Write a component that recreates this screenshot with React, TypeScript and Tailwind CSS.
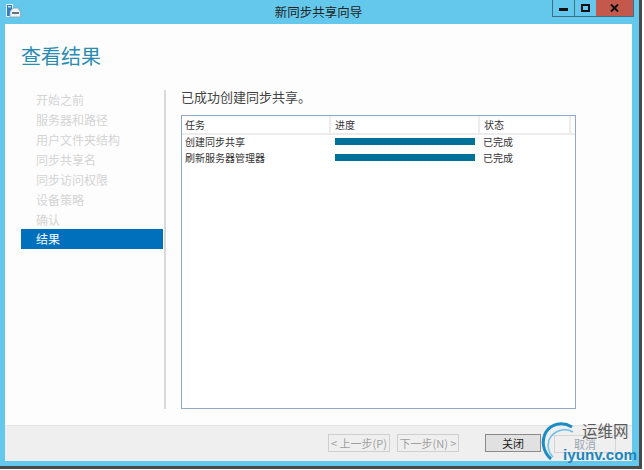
const cjk = "font-['Noto_Sans_CJK_SC','Noto_Sans',sans-serif]";

const steps = ["开始之前", "服务器和路径", "用户文件夹结构", "同步共享名", "同步访问权限", "设备策略", "确认"];

const tasks = ["创建同步共享", "刷新服务器管理器"];

function AppIcon() {
    return (
        <svg width="15" height="14" viewBox="0 0 15 14" className="mt-[4px] ml-[1px] shrink-0">
            <rect x="0.5" y="0.5" width="6" height="12" fill="#2f7fc0" stroke="#e8f4fb" />
            <rect x="2" y="2" width="3" height="1.5" fill="#bfe0f5" />
            <path d="M5 6 L8 4 L12 4 L14.5 8 L14.5 13 L4 13 L4 8 Z" fill="#eef3f6" stroke="#8fa3b0" strokeWidth="0.8" />
            <rect x="6" y="8" width="7" height="2" fill="#5f7482" />
        </svg>
    );
}

function WizardButton({ label, disabled }: { label: string; disabled?: boolean }) {
    return (
        <button
            className={
                disabled
                    ? "w-[62px] h-[18px] border border-[#cfcfcf] bg-[#efefef] text-[11px] leading-[16px] text-[#9f9f9f] whitespace-pre"
                    : "w-[56px] h-[18px] border border-[#8a8a8a] bg-[#e1e1e1] text-[11px] leading-[16px] text-[#222]"
            }
        >
            {label}
        </button>
    );
}

function Watermark() {
    return (
        <div className="absolute left-[538px] top-[419px] w-[106px] h-[51px]">
            <svg width="56" height="51" viewBox="0 0 56 51" className="absolute left-0 top-0">
                <path d="M34 8 C24 2 13 5 8 13 C3 22 5 33 13 40" fill="none" stroke="#1b8cc4" strokeWidth="3" />
                <path d="M35 13 C26 8 15 12 11 21 C9 28 10 33 15 38" fill="none" stroke="#6fc0e4" strokeWidth="1.5" />
            </svg>
            <span className="absolute left-[44px] top-[1px] text-[15.5px] leading-[20px] text-[#5a5a5a]">运维网</span>
            <span className="absolute left-[25px] top-[27px] font-['Liberation_Sans',sans-serif] font-bold text-[15.2px] leading-[18px] text-[#1d86bd]">iyunv.com</span>
        </div>
    );
}

export default function App() {
    return (
        <div className={`relative w-[644px] h-[470px] overflow-hidden bg-white ${cjk}`}>
            <div className="w-[642px] h-[469px] bg-[#4a4a4a] pr-[3px] pb-[3px]">
                <div className="h-full flex flex-col bg-[#63c8ec] pl-[5px] pr-[7px] pb-[5px]">
                    <div className="h-[24px] shrink-0 flex relative">
                        <AppIcon />
                        <div className="flex-1 text-center text-[12.5px] leading-[24px] text-[#222] pl-[64px]">新同步共享向导</div>
                        <div className="flex h-[17px] border-l border-b border-r border-[#3f6f85] -mr-[2px]">
                            <div className="w-[22px] flex items-center justify-center border-r border-[#3f6f85]">
                                <div className="w-[9px] h-[3px] bg-[#111] mt-[3px]" />
                            </div>
                            <div className="w-[21px] flex items-center justify-center">
                                <div className="w-[9px] h-[8px] border-2 border-[#111]" />
                            </div>
                            <div className="w-[37px] flex items-center justify-center bg-[#c4584c] text-[#111]">
                                <svg width="9" height="8" viewBox="0 0 9 8">
                                    <path d="M1 0.5 L8 7.5 M8 0.5 L1 7.5" stroke="#111" strokeWidth="2" />
                                </svg>
                            </div>
                        </div>
                    </div>
                    <div className="flex-1 flex flex-col bg-white min-h-0">
                        <div className="flex-1 flex flex-col bg-[#fdfdfd] min-h-0">
                            <h1 className="pl-[16px] pt-[18px] h-[66px] shrink-0 text-[20px] leading-[28px] font-normal text-[#2b8cb2]">查看结果</h1>
                            <div className="flex h-[319px] pl-[16px]">
                                <div className="w-[142px] shrink-0">
                                    {steps.map((s) => (
                                        <div key={s} className="h-[20px] pl-[15px] text-[12px] leading-[20px] text-[#d4d4d4]">
                                            {s}
                                        </div>
                                    ))}
                                    <div className="h-[20px] pl-[15px] text-[12px] leading-[20px] text-[#f2f8fc] bg-[#0070bd] mt-[-1px]">结果</div>
                                </div>
                                <div className="w-[2px] ml-[1px] bg-[#d9d9d9]" />
                                <div className="flex-1 pl-[15px] min-w-0 flex flex-col">
                                    <p className="h-[25px] shrink-0 text-[13px] leading-[14px] text-[#444]">已成功创建同步共享。</p>
                                    <div className="w-[395px] flex-1 border border-[#8fa9c6] bg-white">
                                        <div className="flex h-[19px] border-b-2 border-[#ececec] text-[10px] leading-[18px] text-[#333]">
                                            <div className="w-[149px] pl-[3px] border-r-2 border-[#ececec]">任务</div>
                                            <div className="w-[149px] pl-[4px] border-r-2 border-[#ececec]">进度</div>
                                            <div className="w-[91px] pl-[4px] border-r-2 border-[#ececec]">状态</div>
                                        </div>
                                        <div className="-mt-px">
                                            {tasks.map((t) => (
                                                <div key={t} className="flex h-[15.5px] items-center text-[10px] leading-[15px] text-[#333]">
                                                    <div className="w-[149px] pl-[3px]">{t}</div>
                                                    <div className="w-[149px] pl-[4px]">
                                                        <div className="h-[7px] w-[140px] bg-[#00729a]" />
                                                    </div>
                                                    <div className="pl-[3px]">已完成</div>
                                                </div>
                                            ))}
                                        </div>
                                    </div>
                                </div>
                            </div>
                        </div>
                        <div className="h-[36px] shrink-0 flex items-center bg-[#efefef] border-t border-[#e4e4e4] pl-[323px] pb-[1px]">
                            <WizardButton label="< 上一步(P)" disabled />
                            <div className="w-[7px]" />
                            <WizardButton label="下一步(N) >" disabled />
                            <div className="w-[26px]" />
                            <WizardButton label="关闭" />
                        </div>
                    </div>
                </div>
            </div>
            <div className="absolute left-[554px] top-[435px] w-[62px] h-[18px] border border-[#d4d4d4] bg-[#efefef] text-center text-[11px] leading-[16px] text-[#9aa6b0]">取消</div>
            <Watermark />
        </div>
    );
}
